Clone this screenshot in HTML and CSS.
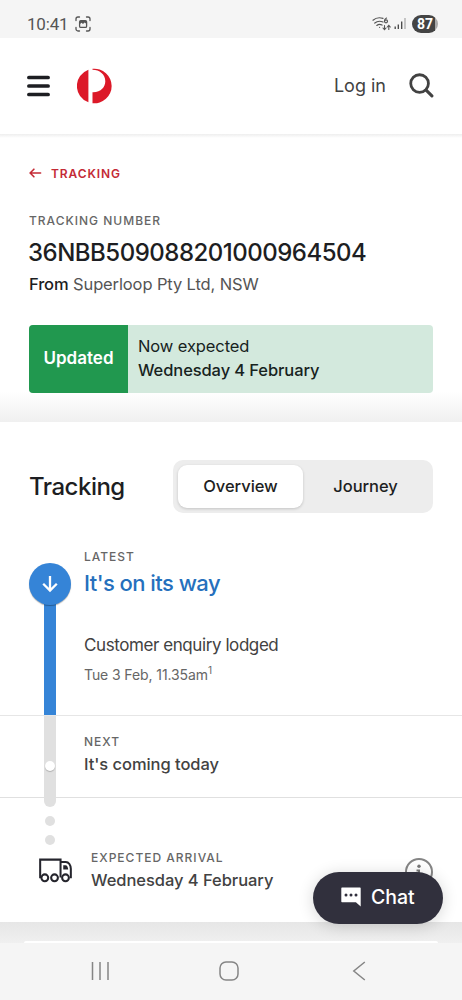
FILE: index.html
```html
<!DOCTYPE html>
<html lang="en">
<head>
<meta charset="utf-8">
<title>Tracking</title>
<link rel="stylesheet" href="styles.css">
</head>
<body>
<div class="statusbar">
  <span class="clock">10:41</span>
  <svg class="shot" width="16" height="16" viewBox="0 0 16 16" fill="none" stroke="#555" stroke-width="1.3" stroke-linecap="round"><path d="M1 4.500V3a2 2 0 0 1 2-2h1.500M11.500 1H13a2 2 0 0 1 2 2v1.500M15 11.500V13a2 2 0 0 1-2 2h-1.500M4.500 15H3a2 2 0 0 1-2-2v-1.500"/><rect x="4.600" y="4.600" width="7" height="6.800" rx="1.200"/><path d="M5 5h6v2.500L9.500 6.600 8 8 6.500 6.800 5 8z" fill="#555" stroke="none"/></svg>
  <svg class="wifi" width="20" height="16" viewBox="0 0 20 16" fill="none" stroke="#555" stroke-width="1.200" stroke-linecap="round"><path d="M1 4.200C4 1.600 7.500 1.200 11 2.400M2.800 7C5 5.200 8 4.800 11 6M4.800 9.400c1.700-1.300 3.500-1.300 5.200-.3"/><circle cx="7.600" cy="11.300" r=".6" fill="#555" stroke="none"/><path d="M14.500 2c-1.500.6-2 2-2 3.100"/><circle cx="14" cy="5.300" r="1.500"/><path d="M12.500 9.500v4M11 12l1.500 1.700L14 12M16.800 13.500v-4M15.300 11l1.500-1.700 1.500 1.700" stroke-width="1.100"/></svg>
  <svg class="signal" width="12" height="14" viewBox="0 0 12 14" stroke-width="1.300"><path d="M1.200 9.500V12M4.300 7.500V12M7.700 4.500V12" stroke="#444"/><path d="M11 1v11" stroke="#aaa"/></svg>
  <span class="battery">87</span>
</div>
<header class="header">
  <svg class="menu" width="23" height="22" viewBox="0 0 23 22" stroke="#1d1e22" stroke-width="3.700" stroke-linecap="round"><path d="M1.900 2.500h19.200M1.900 11h19.200M1.900 19.500h19.200"/></svg>
  <svg class="logo" width="35" height="36" viewBox="0 0 35 36" fill="#dc1928"><path d="M11.400 1.700V34.300A17.300 17.300 0 0 1 11.400 1.700zM15.500.8A17.300 17.300 0 1 1 15.500 35.200V24.200C24 24.500 28.300 19 28.300 13.200 28.300 6.500 22.500 1.800 15.500 1.800z"/></svg>
  <span class="login">Log in</span>
  <svg class="search" width="25" height="25" viewBox="0 0 26 26" fill="none" stroke="#424242" stroke-linecap="round"><circle cx="11" cy="11" r="9.200" stroke-width="2.900"/><path d="M17.800 17.800l6 6" stroke-width="3.200"/></svg>
</header>
<section class="summary">
  <div class="back"><svg width="13" height="10" viewBox="0 0 13 10" fill="none" stroke="#c42a35" stroke-width="1.600" stroke-linecap="round" stroke-linejoin="round"><path d="M11.600 5H1.200M4.900 1.200L1.100 5l3.800 3.800"/></svg><span class="backtext">TRACKING</span></div>
  <div class="label number-label">TRACKING NUMBER</div>
  <h1 class="number">36NBB509088201000964504</h1>
  <div class="from"><b>From</b> Superloop Pty Ltd, NSW</div>
  <div class="banner">
    <div class="tag"><span>Updated</span></div>
    <div class="expected"><span class="now">Now expected</span><span class="date">Wednesday 4 February</span></div>
  </div>
</section>
<main class="card">
  <div class="cardhead">
    <h2 class="title">Tracking</h2>
    <div class="tabs"><div class="tab active"><span>Overview</span></div><div class="tab"><span class="journey">Journey</span></div></div>
  </div>
  <div class="step current">
    <div class="rail">
      <div class="node"><svg width="16" height="18" viewBox="0 0 16 18" fill="none" stroke="#fff" stroke-width="2.300"><path d="M8 1v14.500M1.200 8.700L8 15.500l6.800-6.800"/></svg></div>
    </div>
    <div class="detail">
      <div class="label latest">LATEST</div>
      <div class="status"><span>It's on its way</span></div>
      <div class="event"><span>Customer enquiry lodged</span></div>
      <div class="time"><span>Tue 3 Feb, 11.35am</span><sup>1</sup></div>
    </div>
  </div>
  <div class="step next">
    <div class="rail"><div class="track"><div class="bead"></div></div></div>
    <div class="detail">
      <div class="label nextlabel">NEXT</div>
      <div class="coming"><span>It's coming today</span></div>
    </div>
  </div>
  <div class="step arrival">
    <div class="rail">
      <i class="dot"></i><i class="dot"></i>
      <svg class="truck" width="33" height="25" viewBox="0 0 34 25" fill="none" stroke="#25252d" stroke-width="2.100"><path d="M2.300 19.500H1.200V1.300h21v18.500M22.200 3.700h5.400c3 0 5.200 3.300 5.200 7v8.800h-1"/><path d="M25 7h2.400c1.500 0 2.500 2 2.700 4.500H25z" fill="#25252d" stroke="none"/><g fill="#fff"><circle cx="6" cy="20" r="3.500"/><circle cx="16" cy="20" r="3.500"/><circle cx="27.300" cy="20" r="3.500"/></g></svg>
    </div>
    <div class="detail">
      <div class="label arrlabel">EXPECTED ARRIVAL</div>
      <div class="coming arrdate"><span>Wednesday 4 February</span></div>
    </div>
    <svg class="info" width="30" height="30" viewBox="0 0 30 30"><circle cx="15" cy="15" r="13" fill="none" stroke="#858585" stroke-width="2"/><circle cx="15" cy="9.300" r="1.700" fill="#777"/><path d="M12.500 13.500H15V21M12 21.500h6" fill="none" stroke="#777" stroke-width="2"/></svg>
  </div>
</main>
<div class="below"><div class="peek"></div></div>
<nav class="navbar">
  <svg width="20" height="20" viewBox="0 0 20 20" stroke="#858585" stroke-width="1.500"><path d="M2.500 1v18M10 1v18M18 1v18"/></svg>
  <svg class="home" width="20" height="20" viewBox="0 0 20 20" fill="none" stroke="#858585" stroke-width="1.500"><rect x="1" y="1" width="18" height="18" rx="6"/></svg>
  <svg width="14" height="20" viewBox="0 0 14 20" fill="none" stroke="#858585" stroke-width="1.500"><path d="M12.800 1L1.800 10l11 9"/></svg>
</nav>
<div class="chat"><svg width="20" height="20" viewBox="0 0 20 20"><path d="M1 .5h18a.7.7 0 0 1 .7.7V19.500l-4.800-4.300H1a.7.7 0 0 1-.7-.7V1.200A.7.7 0 0 1 1 .5z" fill="#fff"/><g fill="#31303d"><circle cx="5" cy="8" r="1.500"/><circle cx="10" cy="8" r="1.500"/><circle cx="15" cy="8" r="1.500"/></g></svg><span>Chat</span></div>
</body>
</html>
```
FILE: styles.css
```css
* { box-sizing: border-box; }
body { margin: 0; width: 462px; height: 1000px; overflow: hidden; position: relative; background: #fff; color: #1d1e22; font-family: Inter, "Liberation Sans", sans-serif; display: flex; flex-direction: column; }
svg { display: block; flex: none; }
h1, h2 { margin: 0; font-weight: 500; }
span, h1, h2, .label { white-space: nowrap; }

.statusbar { height: 38px; flex: none; background: #f5f5f5; display: flex; align-items: center; padding: 10px 24px 0 27px; }
.clock { font-family: Roboto, sans-serif; font-size: 17px; line-height: 20px; color: #555; letter-spacing: -.2px; width: 42px; }
.shot { margin-left: 6px; }
.wifi { margin-left: auto; }
.signal { margin: 0 6px 0 2px; }
.battery { width: 26px; height: 18px; border-radius: 9px; background: linear-gradient(90deg, #444 88%, #aaa 88%); color: #fff; font: 700 14px/18px Roboto, sans-serif; text-align: center; }

.header { height: 96px; flex: none; display: flex; align-items: center; padding: 0 28px 0 27px; background: linear-gradient(#fff, #fff); }
.logo { margin-left: 27px; }
.login { margin-left: auto; margin-right: 23px; padding-bottom: 2px; font-size: 18px; color: #424242; }
.search { margin-bottom: 2px; }

.summary { height: 288px; flex: none; padding: 30px 29px 0; display: flex; flex-direction: column; background: linear-gradient(#eee, #fff 4px, #fff 258px, #f0f0f0 288px); }
.label { font-size: 12px; line-height: 16px; font-weight: 500; color: #666; letter-spacing: 1px; }
.back { display: flex; align-items: center; gap: 9px; height: 18px; color: #c42a35; font-size: 12px; font-weight: 600; letter-spacing: .9px; }
.number-label { margin-top: 31px; }
.number { font-size: 24px; line-height: 30px; margin-top: 9px; margin-left: -1px; letter-spacing: -.5px; }
.from { font-size: 16.500px; line-height: 22px; margin-top: 5px; color: #555; white-space: nowrap; letter-spacing: -.12px; }
.from b { font-weight: 500; color: #1d1e22; }
.banner { display: flex; margin-top: 30px; height: 68px; border-radius: 4px; overflow: hidden; background: #d3e9dd; }
.tag { width: 99px; padding-bottom: 2px; background: #21984f; color: #fff; font-size: 17px; font-weight: 600; display: flex; align-items: center; justify-content: center; }
.expected { padding: 9px 0 0 10px; display: flex; flex-direction: column; font-size: 16.500px; line-height: 24px; color: #17231e; letter-spacing: -.1px; }
.date { font-weight: 500; }

.card { height: 500px; flex: none; background: #fff; display: flex; flex-direction: column; }
.cardhead { display: flex; align-items: center; justify-content: space-between; padding: 0 29px; margin-top: 38px; height: 53px; flex: none; }
.title { font-size: 24px; line-height: 30px; letter-spacing: -.5px; }
.tabs { display: flex; width: 260px; height: 53px; background: #ededed; border-radius: 10px; padding: 5px; }
.tab { width: 125px; height: 43px; padding-bottom: 2px; display: flex; align-items: center; justify-content: center; font-size: 16.500px; font-weight: 500; letter-spacing: -.05px; }
.active { background: #fff; border-radius: 9px; box-shadow: 0 1px 3px rgba(0,0,0,.18); }

.step { display: flex; flex: none; }
.rail { width: 84px; flex: none; display: flex; flex-direction: column; align-items: center; padding-left: 16px; }
.detail { flex: 1; }
.current { height: 203px; border-bottom: 1px solid #e6e6e6; }
.current .rail { padding-top: 50px; background: linear-gradient(#3584d7, #3584d7) 44px 70px / 12px 133px no-repeat; }
.node { width: 42px; height: 42px; border-radius: 50%; background: #3584d7; box-shadow: 0 1px 1px rgba(0,0,0,.3); display: flex; align-items: center; justify-content: center; }
.latest { margin-top: 36px; }
.status { font-size: 22px; line-height: 28px; margin-top: 4px; font-weight: 500; color: #2570bd; letter-spacing: -.55px; }
.event { font-size: 17px; line-height: 24px; margin-top: 36px; color: #424242; letter-spacing: -.42px; }
.time { font-size: 14px; line-height: 20px; margin-top: 8px; color: #666; letter-spacing: -.1px; }
.time sup { font-size: 10px; line-height: 0; vertical-align: 6px; }
.next { height: 82px; border-bottom: 1px solid #e0e0e0; }
.current .rail, .next .rail { align-items: flex-start; }
.current .rail { padding-left: 29px; }
.next .rail { padding-left: 44px; }
.track { width: 12px; height: 91px; flex: none; padding-top: 45px; background: #e0e0e0; border-radius: 0 0 6px 6px; display: flex; justify-content: center; }
.bead { width: 10px; height: 10px; flex: none; border-radius: 50%; background: #fff; box-shadow: 0 1px 1px rgba(0,0,0,.22); }
.nextlabel { margin-top: 18px; }
.coming { font-size: 16.500px; line-height: 24px; margin-top: 2px; font-weight: 500; color: #424242; letter-spacing: -.05px; }
.arrival { padding-right: 28px; }
.arrival .rail { width: 91px; padding: 18px 0 0; align-items: flex-start; gap: 9px; }
.dot { width: 10px; height: 10px; margin-left: 45px; border-radius: 50%; background: #e0e0e0; }
.truck { margin: 4px 0 0 39px; }
.arrlabel { margin-top: 52px; }
.info { margin-top: 59px; }

.below { height: 21px; flex: none; padding: 19px 24px 0; background: linear-gradient(#e6e6e6, #f0f0f0); }
.peek { height: 2px; background: #fff; border-radius: 2px 2px 0 0; }
.navbar { height: 57px; flex: none; background: #f5f5f5; display: flex; align-items: center; justify-content: space-between; padding: 0 96px 2px 90px; }
.home { margin-right: 4px; }
.chat { position: absolute; left: 313px; top: 872px; width: 130px; height: 52px; border-radius: 26px; background: #31303d; box-shadow: 0 2px 16px rgba(0,0,0,.16); color: #fff; display: flex; align-items: center; gap: 10px; padding: 0 0 2px 28px; font-size: 19.500px; font-weight: 500; }
```
